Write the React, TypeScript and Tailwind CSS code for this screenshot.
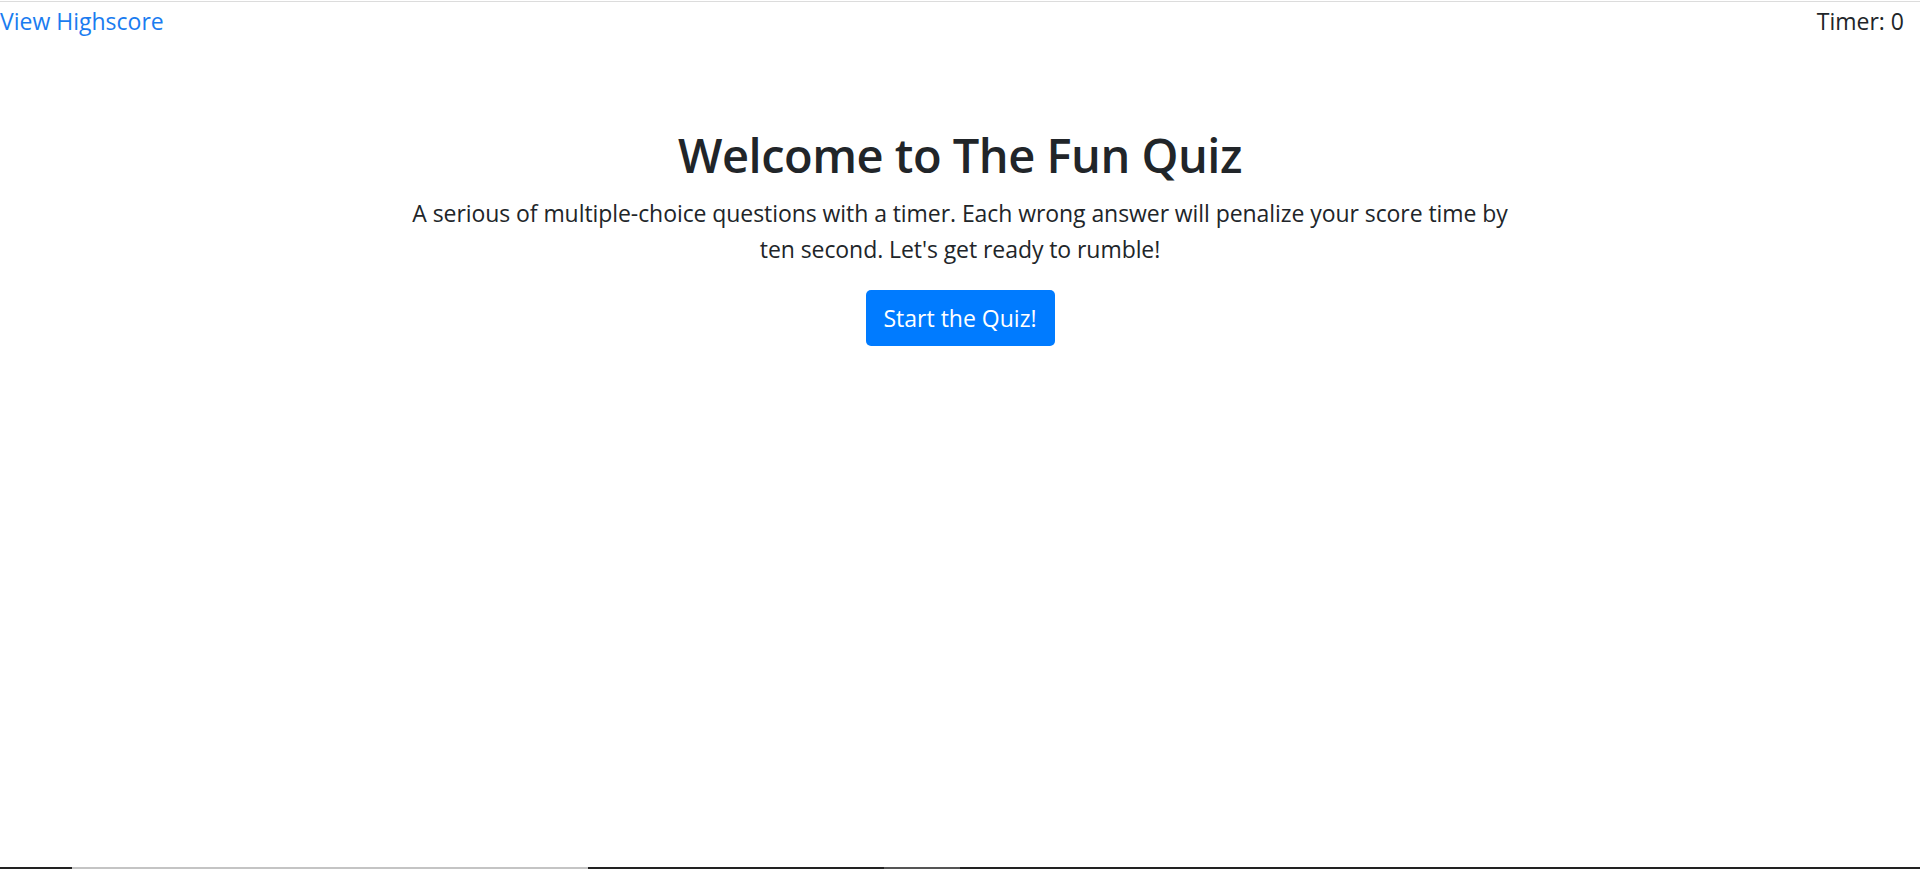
import React from "react";

export default function App() {
  return (
    <div
      className="h-[869px] w-full bg-white flex flex-col text-[#212529] overflow-hidden"
      style={{ fontFamily: '"Open Sans", "Noto Sans", sans-serif' }}
    >
      <div className="h-[1px] bg-[#dcdcdc] mt-[1px]" />
      <div className="flex justify-between items-start pr-[16px] pt-[1px]">
        <a href="#" className="text-[23px] leading-[36px] text-[#1a7cf0]">
          View Highscore
        </a>
        <span className="text-[23px] leading-[36px]">Timer: 0</span>
      </div>
      <div className="flex-1">
        <div className="mx-auto max-w-[1110px] flex flex-col items-center text-center pt-[88px]">
          <h1 className="text-[47px] leading-[56px] font-semibold tracking-[-0.5px]">
            Welcome to The Fun Quiz
          </h1>
          <p className="text-[23px] leading-[36px] mt-[12px] tracking-[-0.07px]">
            A serious of multiple-choice questions with a timer. Each wrong answer will penalize your score time by ten second. Let's get ready to rumble!
          </p>
          <button className="mt-[23px] h-[56px] w-[189px] rounded-[5px] bg-[#007bff] text-white text-[23px] leading-[36px]">
            Start the Quiz!
          </button>
        </div>
      </div>
      <div className="h-[2px] flex">
        <div className="w-[72px] bg-[#222]" />
        <div className="w-[516px] bg-[#c4c4c4]" />
        <div className="w-[296px] bg-[#222]" />
        <div className="w-[76px] bg-[#555]" />
        <div className="flex-1 bg-[#222]" />
      </div>
    </div>
  );
}
